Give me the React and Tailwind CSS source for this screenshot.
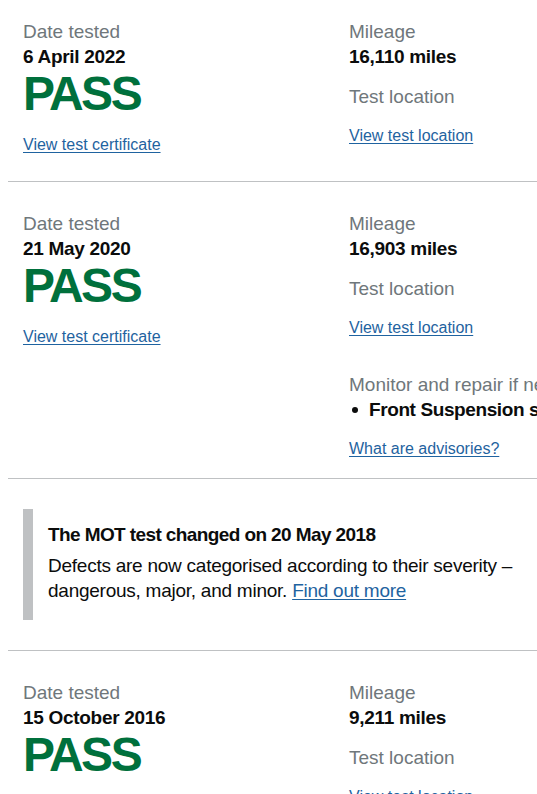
import React from "react";

const font = { fontFamily: "'Liberation Sans', Arial, sans-serif" };

const Label = ({ children, className = "" }) => (
  <div className={`text-[19px] leading-[25px] text-[#6f777b] ${className}`}>{children}</div>
);

const Value = ({ children, className = "" }) => (
  <div className={`text-[19px] leading-[25px] font-bold tracking-[-0.3px] text-[#0b0c0c] ${className}`}>{children}</div>
);

const Link = ({ children, className = "" }) => (
  <a href="#" className={`block w-fit text-[16px] leading-[20px] text-[#1f63a0] underline underline-offset-2 decoration-1 ${className}`}>
    {children}
  </a>
);

const Result = ({ date }) => (
  <div>
    <Label>Date tested</Label>
    <Value>{date}</Value>
    <div className="text-[48px] leading-[50px] font-bold text-[#00703c] tracking-[-2.5px]">PASS</div>
  </div>
);

const TestRow = ({ date, miles, advisory, last }) => (
  <div className={`grid grid-cols-2 border-b border-[#bfc1c3] pt-[29px] ${advisory ? "pb-[19px]" : "pb-[26px]"}`}>
    <div className="pl-[15px] pr-[15px]">
      <Result date={date} />
      {!last && <Link className="mt-[16px]">View test certificate</Link>}
    </div>
    <div className="pl-[15px] pr-[15px]">
      <Label>Mileage</Label>
      <Value>{miles}</Value>
      <Label className="mt-[15px]">Test location</Label>
      <Link className="mt-[17px]">View test location</Link>
      {advisory && (
        <div className="mt-[34px]">
          <Label className="whitespace-nowrap">Monitor and repair if necessary (advisories):</Label>
          <ul className="text-[19px] leading-[25px] font-bold tracking-[-0.4px] text-[#0b0c0c]">
            <li className="flex items-center whitespace-nowrap">
              <span className="w-[20px] shrink-0 pl-[3px]">
                <span className="block w-[6px] h-[6px] rounded-full bg-[#0b0c0c]" />
              </span>
              <span>{advisory}</span>
            </li>
          </ul>
          <Link className="mt-[17px]">What are advisories?</Link>
        </div>
      )}
    </div>
  </div>
);

export default function App() {
  return (
    <div className="w-[537px] h-[794px] overflow-hidden bg-white" style={font}>
      <div className="ml-[8px] w-[652px] -mt-[10px]">
        <TestRow date="6 April 2022" miles="16,110 miles" />
        <TestRow
          date="21 May 2020"
          miles="16,903 miles"
          advisory="Front Suspension slightly worn"
        />
        <div className="border-b border-[#bfc1c3] pt-[30px] pb-[30px] pl-[15px] pr-[15px]">
          <div className="border-l-[10px] border-[#bfc1c3] pl-[15px] pt-[13px] pb-[17px] text-[19px] leading-[25px] text-[#0b0c0c]">
            <div className="font-bold tracking-[-0.6px]">The MOT test changed on 20 May 2018</div>
            <p className="mt-[6px] w-[470px] tracking-[-0.25px]">
              Defects are now categorised according to their severity – dangerous, major, and minor.{" "}
              <a href="#" className="text-[#1f63a0] underline underline-offset-2 decoration-1">Find out more</a>
            </p>
          </div>
        </div>
        <TestRow date="15 October 2016" miles="9,211 miles" />
      </div>
    </div>
  );
}
